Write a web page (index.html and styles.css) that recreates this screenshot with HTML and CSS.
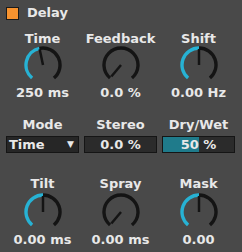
FILE: index.html
```html
<!DOCTYPE html>
<html lang="en">
<head>
    <meta charset="UTF-8">
    <title>Delay</title>
    <link rel="stylesheet" href="styles.css">
</head>
<body>
    <div class="device">
        <div class="title-bar">
            <span class="toggle"></span>
            <span class="title">Delay</span>
        </div>

        <!-- Knob row: Time / Feedback / Shift -->
        <div class="row row-top">
            <div class="param">
                <div class="label">Time</div>
                <svg class="knob" viewBox="0 0 38 38">
                    <path class="arc-on" d="M 8.07 32.02 A 17 17 0 0 1 15.47 2.37"/>
                    <path class="arc-off" d="M 15.47 2.37 A 17 17 0 0 1 29.93 32.02"/>
                    <line class="pointer" x1="19" y1="19" x2="15.67" y2="3.35"/>
                </svg>
                <div class="value">250 ms</div>
            </div>
            <div class="param">
                <div class="label">Feedback</div>
                <svg class="knob" viewBox="0 0 38 38">
                    <path class="arc-off" d="M 8.07 32.02 A 17 17 0 1 1 29.93 32.02"/>
                    <line class="pointer" x1="19" y1="19" x2="9.36" y2="30.49"/>
                </svg>
                <div class="value">0.0 %</div>
            </div>
            <div class="param">
                <div class="label">Shift</div>
                <svg class="knob" viewBox="0 0 38 38">
                    <path class="arc-on" d="M 8.07 32.02 A 17 17 0 0 1 19 2"/>
                    <path class="arc-off" d="M 19 2 A 17 17 0 0 1 29.93 32.02"/>
                    <line class="pointer" x1="19" y1="19" x2="19" y2="3"/>
                </svg>
                <div class="value">0.00 Hz</div>
            </div>
        </div>

        <!-- Box row: Mode / Stereo / Dry/Wet -->
        <div class="row row-mid">
            <div class="param">
                <div class="label">Mode</div>
                <div class="box select">
                    <span>Time</span>
                    <span class="arrow">&#9660;</span>
                </div>
            </div>
            <div class="param">
                <div class="label">Stereo</div>
                <div class="box">0.0 %</div>
            </div>
            <div class="param">
                <div class="label">Dry/Wet</div>
                <div class="box">
                    <div class="fill" style="width: 50%"></div>
                    <span class="box-text">50 %</span>
                </div>
            </div>
        </div>

        <!-- Knob row: Tilt / Spray / Mask -->
        <div class="row row-bottom">
            <div class="param">
                <div class="label">Tilt</div>
                <svg class="knob" viewBox="0 0 38 38">
                    <path class="arc-on" d="M 8.07 32.02 A 17 17 0 0 1 19 2"/>
                    <path class="arc-off" d="M 19 2 A 17 17 0 0 1 29.93 32.02"/>
                    <line class="pointer" x1="19" y1="19" x2="19" y2="3"/>
                </svg>
                <div class="value">0.00 ms</div>
            </div>
            <div class="param">
                <div class="label">Spray</div>
                <svg class="knob" viewBox="0 0 38 38">
                    <path class="arc-off" d="M 8.07 32.02 A 17 17 0 1 1 29.93 32.02"/>
                    <line class="pointer" x1="19" y1="19" x2="9.36" y2="30.49"/>
                </svg>
                <div class="value">0.00 ms</div>
            </div>
            <div class="param">
                <div class="label">Mask</div>
                <svg class="knob" viewBox="0 0 38 38">
                    <path class="arc-on" d="M 8.07 32.02 A 17 17 0 0 1 19 2"/>
                    <path class="arc-off" d="M 19 2 A 17 17 0 0 1 29.93 32.02"/>
                    <line class="pointer" x1="19" y1="19" x2="19" y2="3"/>
                </svg>
                <div class="value">0.00</div>
            </div>
        </div>
    </div>
</body>
</html>
```

FILE: styles.css
```css
:root {
    --panel-bg: #494949;
    --text-color: #e8e8e8;
    --knob-on: #27b2d4;
    --knob-off: #141414;
    --box-bg: #2b2b2b;
    --box-border: #151515;
    --fill-color: #1f7b8b;
    --toggle-color: #f7932f;
}

* {
    margin: 0;
    padding: 0;
    box-sizing: border-box;
}

body {
    font-family: 'DejaVu Sans', 'Liberation Sans', sans-serif;
    font-weight: bold;
    font-size: 13px;
    color: var(--text-color);
    background-color: var(--panel-bg);
    width: 242px;
    height: 252px;
    overflow: hidden;
}

.device {
    padding: 6px 6px 0 6px;
}

.title-bar {
    display: flex;
    align-items: center;
    gap: 8px;
    height: 14px;
}

.toggle {
    width: 13px;
    height: 13px;
    background-color: var(--toggle-color);
    border: 1px solid #1a1a1a;
}

.title {
    line-height: 14px;
}

.row {
    display: grid;
    grid-template-columns: repeat(3, 73px);
    column-gap: 5px;
}

.row-top {
    margin-top: 11px;
}

.row-mid {
    margin-top: 17px;
}

.row-bottom {
    margin-top: 23px;
}

.param {
    display: flex;
    flex-direction: column;
    align-items: center;
}

.label,
.value {
    line-height: 15px;
    white-space: nowrap;
}

.knob {
    width: 38px;
    height: 38px;
}

.row-bottom .knob {
    margin-top: 2px;
}

.value {
    margin-top: 1px;
}

.arc-on,
.arc-off {
    fill: none;
    stroke-width: 3.4;
}

.arc-on {
    stroke: var(--knob-on);
}

.arc-off {
    stroke: var(--knob-off);
}

.pointer {
    stroke: var(--knob-off);
    stroke-width: 2.5;
}

.box {
    position: relative;
    width: 100%;
    height: 17px;
    margin-top: 4px;
    background-color: var(--box-bg);
    border: 1px solid var(--box-border);
    display: flex;
    align-items: center;
    justify-content: center;
    line-height: 15px;
}

.select {
    justify-content: space-between;
    padding: 0 4px 0 2px;
    background-color: #262626;
}

.arrow {
    font-size: 9px;
}

/* Dry/Wet fill bar sits under the text */
.fill {
    position: absolute;
    left: 0;
    top: 0;
    bottom: 0;
    background-color: var(--fill-color);
}

.box-text {
    position: relative;
}
```
